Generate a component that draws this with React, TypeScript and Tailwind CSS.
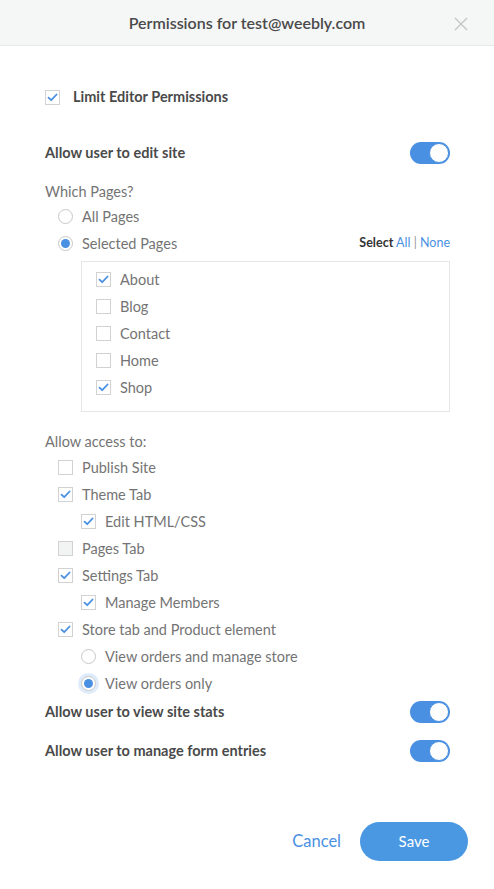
import type { ReactNode } from "react";

const font = { fontFamily: "Lato, 'Open Sans', sans-serif" };

function Check({ checked = false, disabled = false }: { checked?: boolean; disabled?: boolean }) {
  return (
    <span
      className={`flex h-[15px] w-[15px] shrink-0 items-center justify-center border border-[#d2d2d2] ${
        disabled ? "bg-[#f2f3f3]" : "bg-white"
      }`}
    >
      {checked && (
        <svg width="11" height="9" viewBox="0 0 11 9" fill="none">
          <path d="M1.5 4.6 4.2 7.2 9.6 1.5" stroke="#4a90e2" strokeWidth="1.8" strokeLinecap="round" strokeLinejoin="round" />
        </svg>
      )}
    </span>
  );
}

function Radio({ checked = false, focus = false }: { checked?: boolean; focus?: boolean }) {
  return (
    <span
      className={`flex h-[15px] w-[15px] shrink-0 items-center justify-center rounded-full border border-[#c8c8c8] bg-white ${
        focus ? "shadow-[0_0_0_3px_rgba(74,144,226,0.18)]" : ""
      }`}
    >
      {checked && <span className="h-[9px] w-[9px] rounded-full bg-[#4a90e2]" />}
    </span>
  );
}

function Toggle() {
  return (
    <span className="flex h-[22px] w-[40px] items-center justify-end rounded-full bg-[#4a90e2] p-[1px]">
      <span className="h-[20px] w-[20px] rounded-full border border-[#4a90e2] bg-white" />
    </span>
  );
}

function Row({ control, children, indent = "" }: { control: ReactNode; children: ReactNode; indent?: string }) {
  return (
    <div className={`flex h-[27px] items-center gap-[9px] text-[14.5px] text-[#747474] ${indent}`}>
      {control}
      <span>{children}</span>
    </div>
  );
}

function ToggleRow({ label, className = "" }: { label: string; className?: string }) {
  return (
    <div className={`flex h-[22px] items-center justify-between ${className}`}>
      <span className="text-[14.5px] font-bold text-[#4a4a4a]">{label}</span>
      <Toggle />
    </div>
  );
}

export default function App() {
  return (
    <div className="min-h-[889px] w-[494px] bg-white" style={font}>
      {/* Header */}
      <div className="relative flex h-[46px] items-center justify-center border-b border-[#e8e9e9] bg-[#f5f6f6]">
        <h1 className="text-[16px] font-semibold text-[#4a4a4a]">Permissions for test@weebly.com</h1>
        <svg className="absolute right-[26px] top-[17px]" width="14" height="14" viewBox="0 0 14 14">
          <path d="M1 1 13 13M13 1 1 13" stroke="#c4c6c6" strokeWidth="1.4" />
        </svg>
      </div>

      <div className="pl-[45px] pr-[44px]">
        <div className="mt-[41px] flex h-[20px] items-center gap-[13px]">
          <Check checked />
          <span className="text-[14.5px] font-bold text-[#4a4a4a]">Limit Editor Permissions</span>
        </div>

        <ToggleRow label="Allow user to edit site" className="mt-[35px]" />

        <p className="mt-[18px] h-[20px] text-[14.5px] leading-[20px] text-[#747474]">Which Pages?</p>
        <div className="mt-[1px]">
          <Row control={<Radio />} indent="pl-[13px]">All Pages</Row>
          <div className="flex items-center justify-between">
            <Row control={<Radio checked />} indent="pl-[13px]">Selected Pages</Row>
            <span className="text-[12.5px] text-[#4a90e2]">
              <span className="font-bold text-[#333]">Select</span> All <span className="text-[#999]">|</span> None
            </span>
          </div>
        </div>

        <div className="ml-[36px] mt-[4px] border border-[#e6e6e6] pb-[10px] pl-[14px] pt-[4px]">
          <Row control={<Check checked />}>About</Row>
          <Row control={<Check />}>Blog</Row>
          <Row control={<Check />}>Contact</Row>
          <Row control={<Check />}>Home</Row>
          <Row control={<Check checked />}>Shop</Row>
        </div>

        <p className="mt-[20px] h-[20px] text-[14.5px] leading-[20px] text-[#747474]">Allow access to:</p>
        <div className="mt-[2px]">
          <Row control={<Check />} indent="pl-[13px]">Publish Site</Row>
          <Row control={<Check checked />} indent="pl-[13px]">Theme Tab</Row>
          <Row control={<Check checked />} indent="pl-[36px] gap-[8px]">Edit HTML/CSS</Row>
          <Row control={<Check disabled />} indent="pl-[13px]">Pages Tab</Row>
          <Row control={<Check checked />} indent="pl-[13px]">Settings Tab</Row>
          <Row control={<Check checked />} indent="pl-[36px] gap-[8px]">Manage Members</Row>
          <Row control={<Check checked />} indent="pl-[13px]">Store tab and Product element</Row>
          <Row control={<Radio />} indent="pl-[36px] gap-[8px]">View orders and manage store</Row>
          <Row control={<Radio checked focus />} indent="pl-[36px] gap-[8px]">View orders only</Row>
        </div>

        <ToggleRow label="Allow user to view site stats" className="mt-[4px]" />
        <ToggleRow label="Allow user to manage form entries" className="mt-[17px]" />
      </div>

      {/* Footer */}
      <div className="mt-[60px] flex items-center justify-end gap-[19px] pr-[26px]">
        <button className="text-[16.5px] text-[#4a90e2]">Cancel</button>
        <button className="h-[39px] w-[108px] rounded-full bg-[#4a98e2] text-[15px] text-white">Save</button>
      </div>
    </div>
  );
}
